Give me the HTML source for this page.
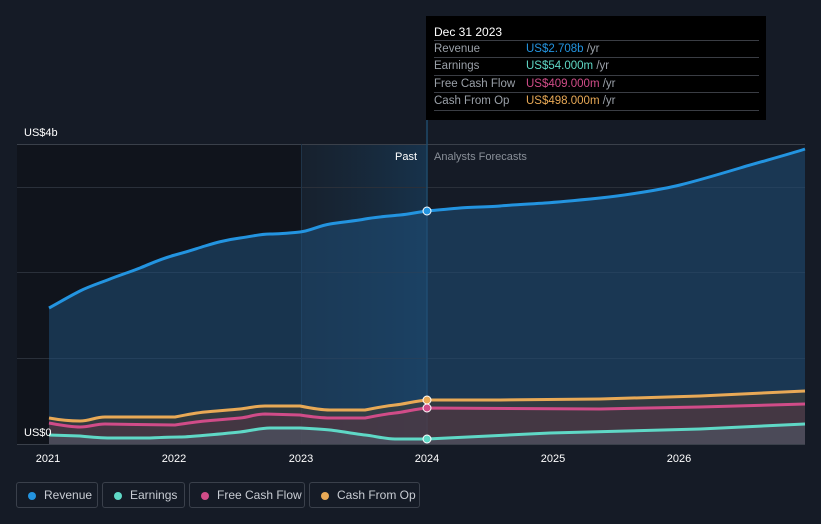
<!DOCTYPE html>
<html><head><style>
html,body{margin:0;padding:0;background:#151b26;width:821px;height:524px;overflow:hidden;font-family:"Liberation Sans",sans-serif;}
svg{position:absolute;left:0;top:0}
.leg{position:absolute;top:482px;height:26px;border:1px solid #3a404b;border-radius:3px;box-sizing:border-box;color:#c8ccd3;font-size:12px;line-height:25px;padding-left:27px;white-space:nowrap}
.leg i{position:absolute;left:11px;top:9px;width:8px;height:8px;border-radius:50%}
.tt{position:absolute;left:426px;top:16px;width:340px;height:104px;background:#000;color:#9aa0a8;font-size:11.5px;white-space:nowrap}
.tt .r{position:absolute;left:8px;width:325px;border-top:1px solid #3a3d44;height:17px;line-height:17px}
.tt .v{position:absolute;left:92px}
</style></head><body>
<svg width="821" height="524">
<defs>
<linearGradient id="pb" x1="0" x2="1" y1="0" y2="0"><stop offset="0" stop-color="#1a2a3a" stop-opacity="0.4"/><stop offset="1" stop-color="#173550" stop-opacity="0.9"/></linearGradient>
</defs>
<rect x="17" y="144" width="284" height="300" fill="#10141c"/>
<rect x="301" y="144" width="126" height="300" fill="url(#pb)"/>
<g stroke="#2a303a" stroke-width="1">
<line x1="17" y1="144.5" x2="805" y2="144.5" stroke="#3a404a"/>
<line x1="17" y1="187.5" x2="805" y2="187.5"/>
<line x1="17" y1="272.5" x2="805" y2="272.5"/>
<line x1="17" y1="358.5" x2="805" y2="358.5"/>
</g>
<line x1="301.5" y1="144" x2="301.5" y2="444" stroke="#1f3448"/>
<line x1="427" y1="16" x2="427" y2="444" stroke="#1f4a6a" stroke-width="1.5"/>
<path d="M49,308 C60,302 70,296 80,291 S100,283 110,279 S130,272 140,268 S160,259 175,255 S195,249 205,246 S225,240 240,238 S260,234 270,234 S290,233 300,232 S318,226 330,224 S355,221 365,219 S390,216 400,215 S418,212 427,211 S450,209 460,208 S490,207 500,206 S530,204 545,203 S580,200 600,198 S660,190 680,185 S720,174 740,168 S790,154 805,149 L805,444 L49,444Z" fill="#1f4f78" fill-opacity="0.55"/>
<path d="M49,418 C60,420 70,421 80,421 S95,417 105,417 L175,417 S195,413 205,412 S230,410 240,409 S255,406 265,406 L300,406 S320,410 330,410 L365,410 S385,406 395,405 S415,401 427,400 L500,400 L600,399 L700,396 L805,391 L805,444 L49,444Z" fill="#4a4030" fill-opacity="0.5"/>
<path d="M49,423 C60,425 70,427 80,427 S95,424 105,424 L175,425 S195,422 205,421 S230,419 240,418 S255,414 265,414 L300,415 S320,418 330,418 L365,418 S385,414 395,413 S415,409 427,408 L600,409 L700,407 L805,404 L805,444 L49,444Z" fill="#5a3448" fill-opacity="0.45"/>
<path d="M49,435 L80,436 S100,438 110,438 L150,438 S170,437 180,437 S230,433 240,432 S260,428 270,428 L300,428 S320,429 330,430 S355,434 365,435 S385,439 395,439 L427,439 L550,433 L700,429 L805,424 L805,444 L49,444Z" fill="#5a7080" fill-opacity="0.35"/>
<g fill="none" stroke-width="3" stroke-linejoin="round">
<path d="M49,308 C60,302 70,296 80,291 S100,283 110,279 S130,272 140,268 S160,259 175,255 S195,249 205,246 S225,240 240,238 S260,234 270,234 S290,233 300,232 S318,226 330,224 S355,221 365,219 S390,216 400,215 S418,212 427,211 S450,209 460,208 S490,207 500,206 S530,204 545,203 S580,200 600,198 S660,190 680,185 S720,174 740,168 S790,154 805,149" stroke="#2394e0"/>
<path d="M49,418 C60,420 70,421 80,421 S95,417 105,417 L175,417 S195,413 205,412 S230,410 240,409 S255,406 265,406 L300,406 S320,410 330,410 L365,410 S385,406 395,405 S415,401 427,400 L500,400 L600,399 L700,396 L805,391" stroke="#e8a956"/>
<path d="M49,423 C60,425 70,427 80,427 S95,424 105,424 L175,425 S195,422 205,421 S230,419 240,418 S255,414 265,414 L300,415 S320,418 330,418 L365,418 S385,414 395,413 S415,409 427,408 L600,409 L700,407 L805,404" stroke="#d04c88"/>
<path d="M49,435 L80,436 S100,438 110,438 L150,438 S170,437 180,437 S230,433 240,432 S260,428 270,428 L300,428 S320,429 330,430 S355,434 365,435 S385,439 395,439 L427,439 L550,433 L700,429 L805,424" stroke="#5fd8c6"/>
</g>
<line x1="17" y1="444.5" x2="805" y2="444.5" stroke="#3a404a"/>
<g stroke="#fff" stroke-width="1">
<circle cx="427" cy="211" r="4" fill="#2394e0"/>
<circle cx="427" cy="400" r="4" fill="#e8a956"/>
<circle cx="427" cy="408" r="4" fill="#d04c88"/>
<circle cx="427" cy="439" r="4" fill="#5fd8c6"/>
</g>
<g font-size="11" fill="#fff" font-family="Liberation Sans">
<text x="24" y="136">US$4b</text>
<text x="24" y="436">US$0</text>
<text x="417" y="160" text-anchor="end">Past</text>
<text x="434" y="160" fill="#8a9099">Analysts Forecasts</text>
<text x="48" y="462" text-anchor="middle">2021</text>
<text x="174" y="462" text-anchor="middle">2022</text>
<text x="301" y="462" text-anchor="middle">2023</text>
<text x="427" y="462" text-anchor="middle">2024</text>
<text x="553" y="462" text-anchor="middle">2025</text>
<text x="679" y="462" text-anchor="middle">2026</text>
</g>
</svg>
<div class="tt">
<div style="position:absolute;left:8px;top:9px;color:#fff;font-size:12px">Dec 31 2023</div>
<div class="r" style="top:24px">Revenue<span class="v"><span style="color:#2394e0">US$2.708b</span> /yr</span></div>
<div class="r" style="top:41px">Earnings<span class="v"><span style="color:#5fd8c6">US$54.000m</span> /yr</span></div>
<div class="r" style="top:59px">Free Cash Flow<span class="v"><span style="color:#d04c88">US$409.000m</span> /yr</span></div>
<div class="r" style="top:76px;border-bottom:1px solid #3a3d44">Cash From Op<span class="v"><span style="color:#e8a956">US$498.000m</span> /yr</span></div>
</div>
<div class="leg" style="left:16px;width:82px"><i style="background:#2394e0"></i>Revenue</div>
<div class="leg" style="left:102px;width:83px"><i style="background:#5fd8c6"></i>Earnings</div>
<div class="leg" style="left:189px;width:116px"><i style="background:#d04c88"></i>Free Cash Flow</div>
<div class="leg" style="left:309px;width:111px"><i style="background:#e8a956"></i>Cash From Op</div>
</body></html>
